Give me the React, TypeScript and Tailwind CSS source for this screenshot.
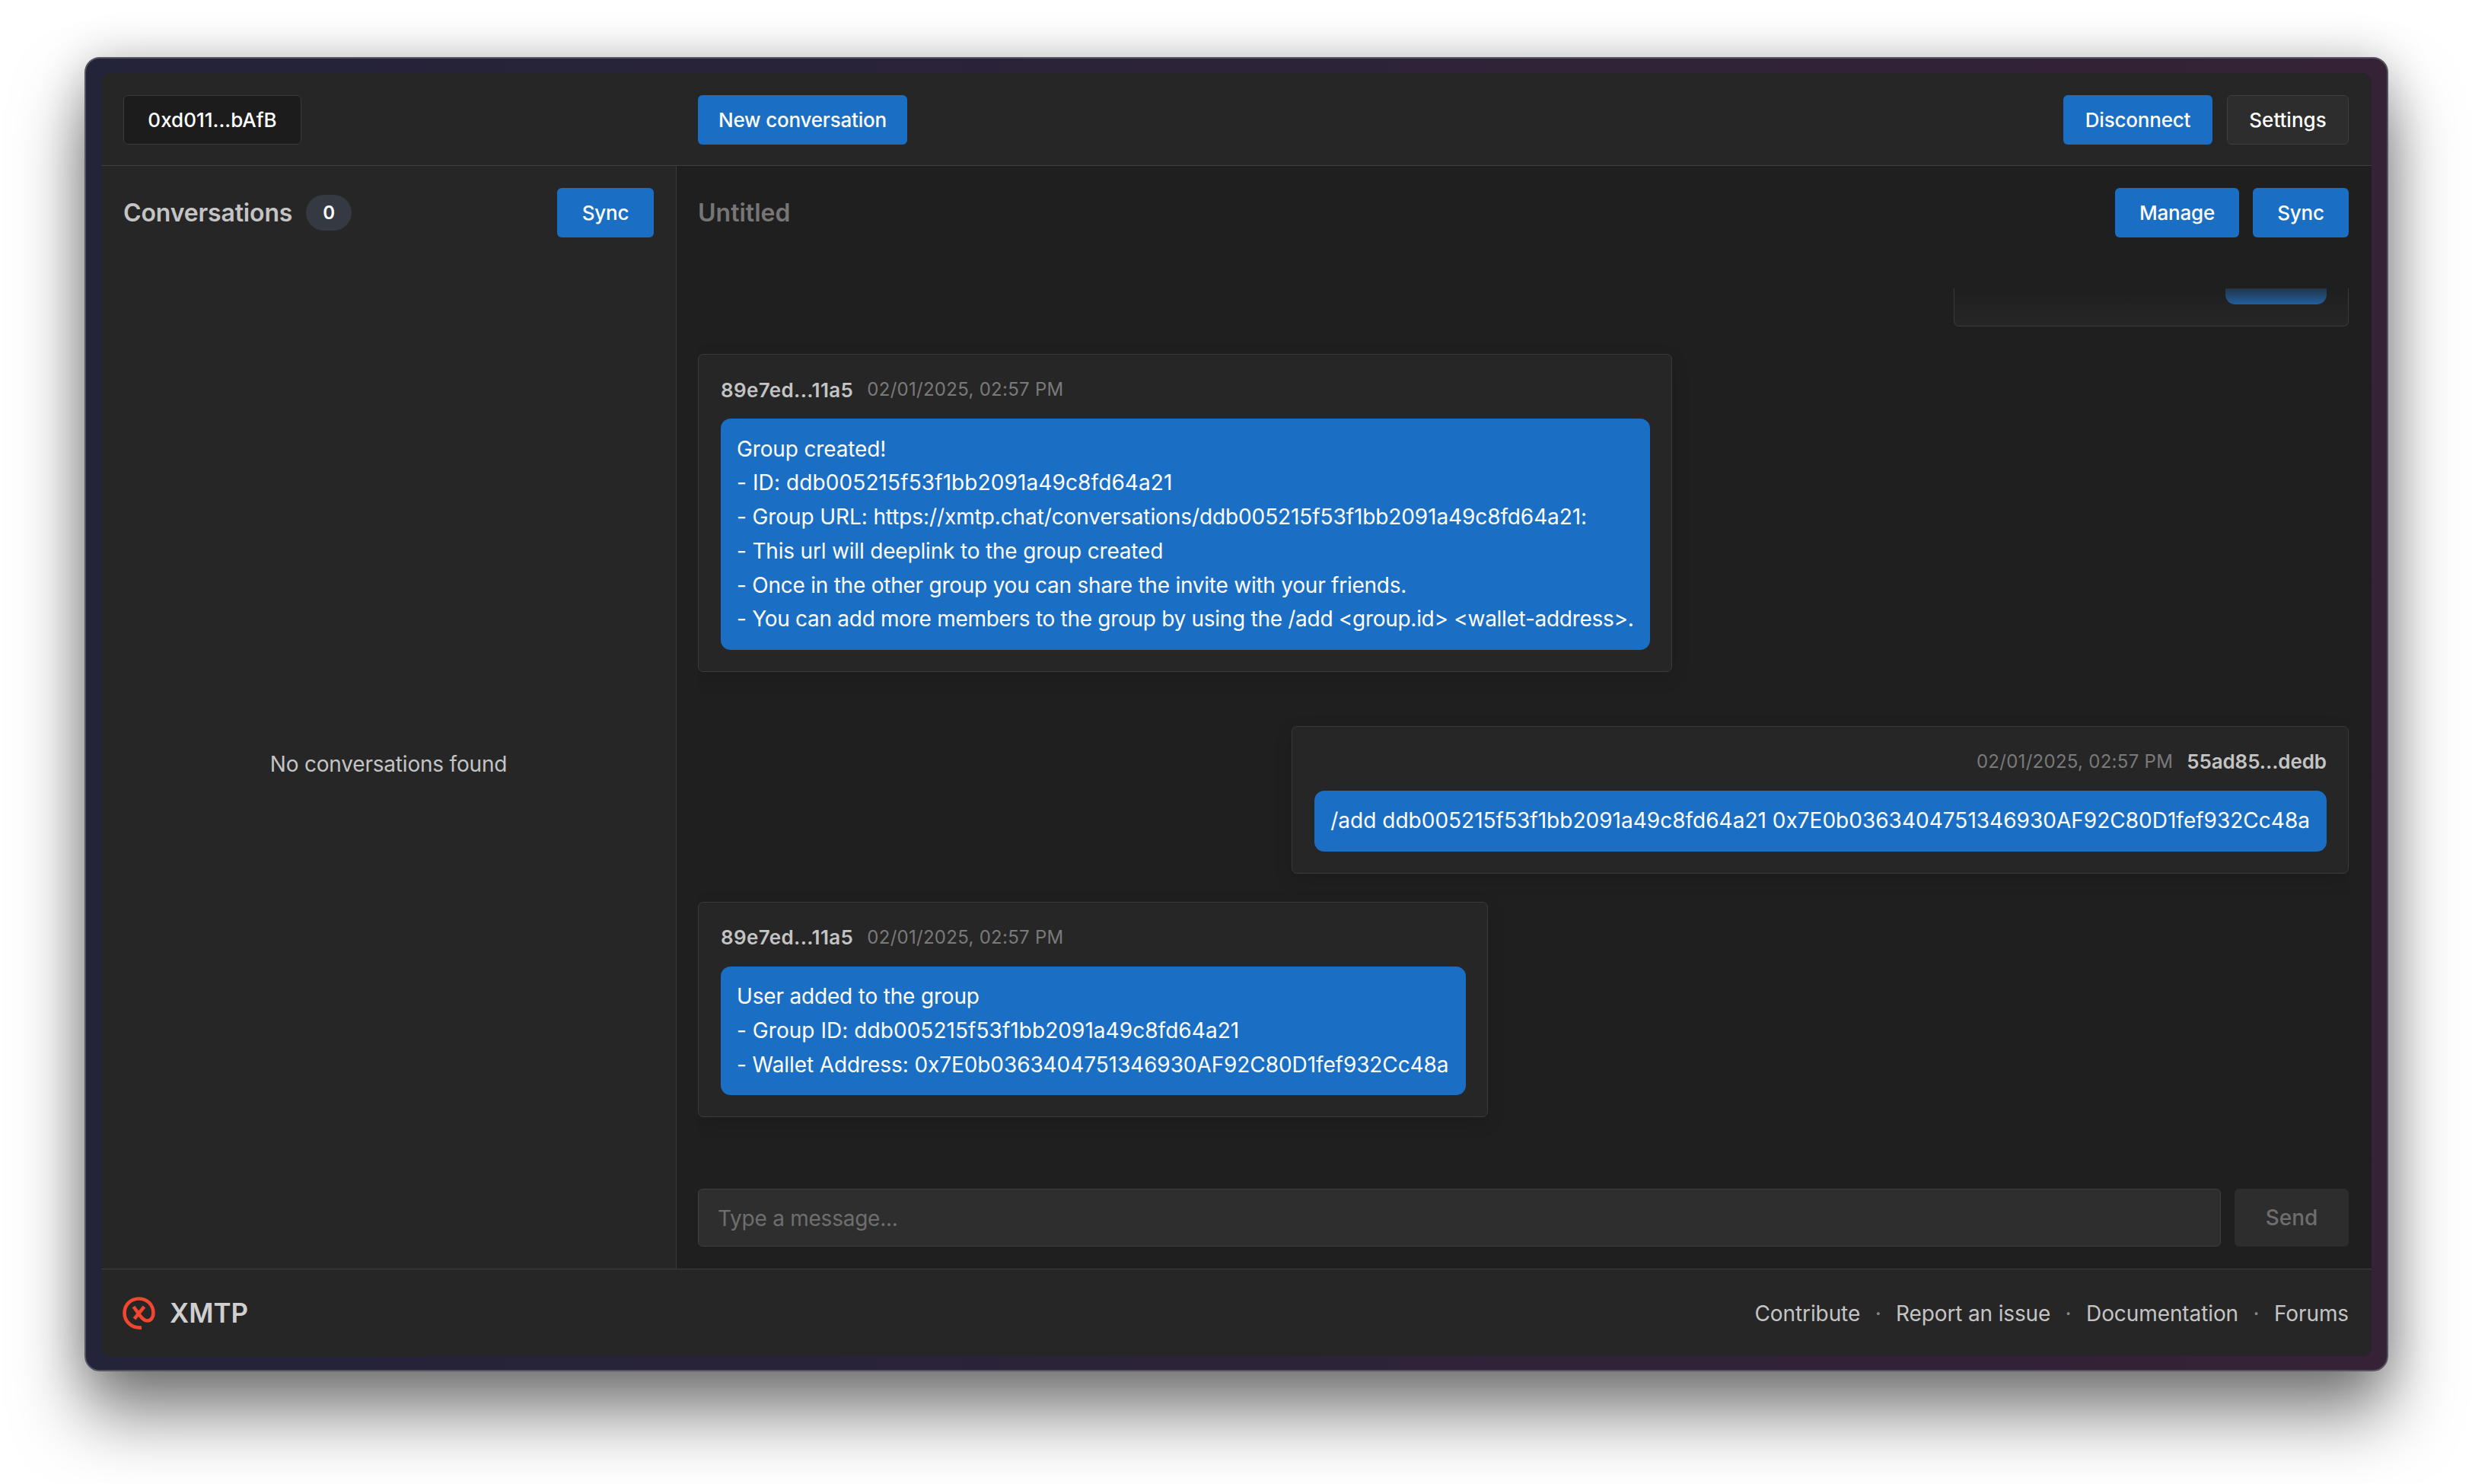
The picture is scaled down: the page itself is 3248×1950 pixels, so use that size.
const sans = "font-['Inter','Noto_Sans',sans-serif]";

type Line = { text: string; className: string };

function BlueButton({ children, className }: { children: React.ReactNode; className: string }) {
  return (
    <button className={`h-[65px] rounded-[6px] bg-[#1a6fc4] text-[26px] font-medium tracking-[-0.2px] text-white ${className}`}>
      {children}
    </button>
  );
}

function XmtpLogo() {
  return (
    <svg viewBox="0 0 43 43" className="h-[43px] w-[43px] shrink-0" fill="none" stroke="#f0472e" strokeWidth="4.6">
      <path d="M25 40.5 C12 41.5 2.5 32.5 2.5 21.5 C2.5 10.5 10.5 2.5 21.5 2.5 C32.5 2.5 40.5 10.5 40.5 21.5 C40.5 27.5 37 31.5 32.5 31.5 C27.5 31.5 24.5 27 22 23.5 L14.5 13" />
      <path d="M28.5 13 L15.5 29" />
    </svg>
  );
}

function Meta({ name, time, mine }: { name: string; time: string; mine?: boolean }) {
  const who = (
    <span className={`text-[26px] font-semibold text-[#c4c4c4] ${mine ? "tracking-[-0.1px]" : "tracking-[0.35px]"}`}>{name}</span>
  );
  const when = <span className="text-[24px] tracking-[0.28px] text-[#7a7a7a]">{time}</span>;
  return (
    <div className={`flex h-[40px] items-center gap-[18px] ${mine ? "justify-end" : ""}`}>
      {mine ? when : who}
      {mine ? who : when}
    </div>
  );
}

function Message({ name, mine, lines, className }: { name: string; mine?: boolean; lines: Line[]; className?: string }) {
  return (
    <div className={`w-fit rounded-[7px] border border-[#3a3a3a] bg-[#262626] pt-[26px] pr-[28px] pb-[28px] pl-[29px] shadow-[0_8px_24px_rgba(0,0,0,0.12)] ${mine ? "self-end" : "self-start"} ${className ?? ""}`}>
      <Meta name={name} time="02/01/2025, 02:57 PM" mine={mine} />
      <div className="mt-[18px] whitespace-nowrap rounded-[13px] bg-[#1a6fc4] py-[17.5px] pr-[22px] pl-[21px] text-[28px] leading-[44.8px] text-white">
        {lines.map((line) => (
          <div key={line.text} className={line.className}>
            {line.text}
          </div>
        ))}
      </div>
    </div>
  );
}

export default function App() {
  return (
    <div className={`h-[1950px] w-[3248px] overflow-hidden bg-white pt-[75px] pl-[111px] ${sans}`}>
      {/* window frame */}
      <div className="h-[1727px] w-[3027px] rounded-[20px] border-2 border-[#55535f] bg-gradient-to-r from-[#23233a] to-[#352236] px-[20px] pt-[19px] pb-[18px] shadow-[0_56px_90px_rgba(0,0,0,0.5),0_0_60px_rgba(0,0,0,0.2)]">
        <div className="flex h-full flex-col overflow-hidden rounded-[12px] bg-[#262626]">
          {/* top bar */}
          <header className="flex h-[122px] shrink-0 items-center border-b border-[#3e3e3e] pt-[2px] pr-[30px] pl-[29px]">
            <div className="w-[755px] shrink-0">
              <div className="flex h-[65px] w-[234px] items-center justify-center rounded-[6px] border border-[#3a3a3a] bg-[#1c1c1c] text-[26px] font-medium text-white">
                0xd011...bAfB
              </div>
            </div>
            <BlueButton className="w-[275px]">New conversation</BlueButton>
            <div className="ml-auto flex gap-[19px]">
              <BlueButton className="w-[196px]">Disconnect</BlueButton>
              <button className="h-[65px] w-[160px] rounded-[6px] border border-[#3f3f3f] bg-[#2d2d2d] text-[26px] font-medium text-white">
                Settings
              </button>
            </div>
          </header>

          <div className="flex min-h-0 flex-1">
            {/* conversation list */}
            <aside className="flex w-[756px] shrink-0 flex-col border-r border-[#3a3a3a] pt-[29px] pr-[29px] pl-[29px]">
              <div className="flex h-[65px] items-center">
                <h2 className="text-[32px] font-semibold tracking-[-0.15px] text-[#c4c4c4]">Conversations</h2>
                <span className="ml-[18px] flex h-[47px] w-[60px] items-center justify-center rounded-full bg-[#353a42] text-[24px] font-semibold text-white">
                  0
                </span>
                <BlueButton className="ml-auto w-[127px]">Sync</BlueButton>
              </div>
              <div className="flex flex-1 items-center justify-center pt-[28px] text-[28px] tracking-[-0.2px] text-[#c4c4c4]">
                No conversations found
              </div>
            </aside>

            {/* chat */}
            <main className="flex min-w-0 flex-1 flex-col bg-[#1f1f1f] pr-[30px] pl-[28px]">
              <div className="flex h-[161px] shrink-0 items-start pt-[29px]">
                <h2 className="flex h-[65px] items-center text-[32px] font-semibold text-[#767676]">Untitled</h2>
                <div className="ml-auto flex gap-[18px]">
                  <BlueButton className="w-[163px]">Manage</BlueButton>
                  <BlueButton className="w-[126px]">Sync</BlueButton>
                </div>
              </div>

              <div className="flex min-h-0 flex-1 flex-col overflow-hidden">
                {/* message scrolled out of view at the top */}
                <div className="flex h-[50px] w-[519px] shrink-0 justify-end self-end rounded-b-[7px] border border-t-0 border-[#3a3a3a] bg-gradient-to-b from-[#1f1f1f] to-[#262626] pr-[28px]">
                  <div className="h-[21px] w-[133px] rounded-b-[13px] bg-gradient-to-b from-[#22364a] to-[#1f5e9f]" />
                </div>
                <Message
                  name="89e7ed...11a5"
                  className="mt-[36px]"
                  lines={[
                    { text: "Group created!", className: "tracking-[-0.15px]" },
                    { text: "- ID: ddb005215f53f1bb2091a49c8fd64a21", className: "tracking-[0.1px]" },
                    { text: "- Group URL: https://xmtp.chat/conversations/ddb005215f53f1bb2091a49c8fd64a21:", className: "tracking-[-0.1px]" },
                    { text: "- This url will deeplink to the group created", className: "tracking-[-0.18px]" },
                    { text: "- Once in the other group you can share the invite with your friends.", className: "tracking-[-0.24px]" },
                    { text: "- You can add more members to the group by using the /add <group.id> <wallet-address>.", className: "tracking-[-0.29px]" },
                  ]}
                />
                <Message
                  name="55ad85...dedb"
                  mine
                  className="mt-[71px]"
                  lines={[
                    { text: "/add ddb005215f53f1bb2091a49c8fd64a21 0x7E0b0363404751346930AF92C80D1fef932Cc48a", className: "tracking-[0.01px]" },
                  ]}
                />
                <Message
                  name="89e7ed...11a5"
                  className="mt-[37px]"
                  lines={[
                    { text: "User added to the group", className: "tracking-[-0.18px]" },
                    { text: "- Group ID: ddb005215f53f1bb2091a49c8fd64a21", className: "tracking-[0.05px]" },
                    { text: "- Wallet Address: 0x7E0b0363404751346930AF92C80D1fef932Cc48a", className: "tracking-[-0.09px]" },
                  ]}
                />
              </div>

              {/* composer */}
              <div className="flex shrink-0 gap-[18px] pb-[29px]">
                <input
                  placeholder="Type a message..."
                  className="h-[76px] min-w-0 flex-1 rounded-[6px] border border-[#3f3f3f] bg-[#2e2e2e] px-[25px] pt-[1px] text-[28px] tracking-[-0.25px] text-white outline-none placeholder:text-[#6e6e6e]"
                />
                <button className="h-[76px] w-[150px] rounded-[6px] bg-[#2d2d2d] text-[28px] font-medium text-[#6e6e6e]">
                  Send
                </button>
              </div>
            </main>
          </div>

          {/* footer */}
          <footer className="flex h-[115px] shrink-0 items-center border-t border-[#3e3e3e] pt-[1px] pr-[30px] pl-[28px]">
            <XmtpLogo />
            <span className="ml-[19px] text-[35px] font-semibold text-[#cfcfcf]">XMTP</span>
            <nav className="ml-auto flex items-center gap-[19.5px] text-[28px] tracking-[-0.1px] text-[#c4c4c4]">
              <span>Contribute</span>
              <span className="text-[#888888]">·</span>
              <span className="tracking-[-0.15px]">Report an issue</span>
              <span className="text-[#888888]">·</span>
              <span>Documentation</span>
              <span className="text-[#888888]">·</span>
              <span>Forums</span>
            </nav>
          </footer>
        </div>
      </div>
    </div>
  );
}
